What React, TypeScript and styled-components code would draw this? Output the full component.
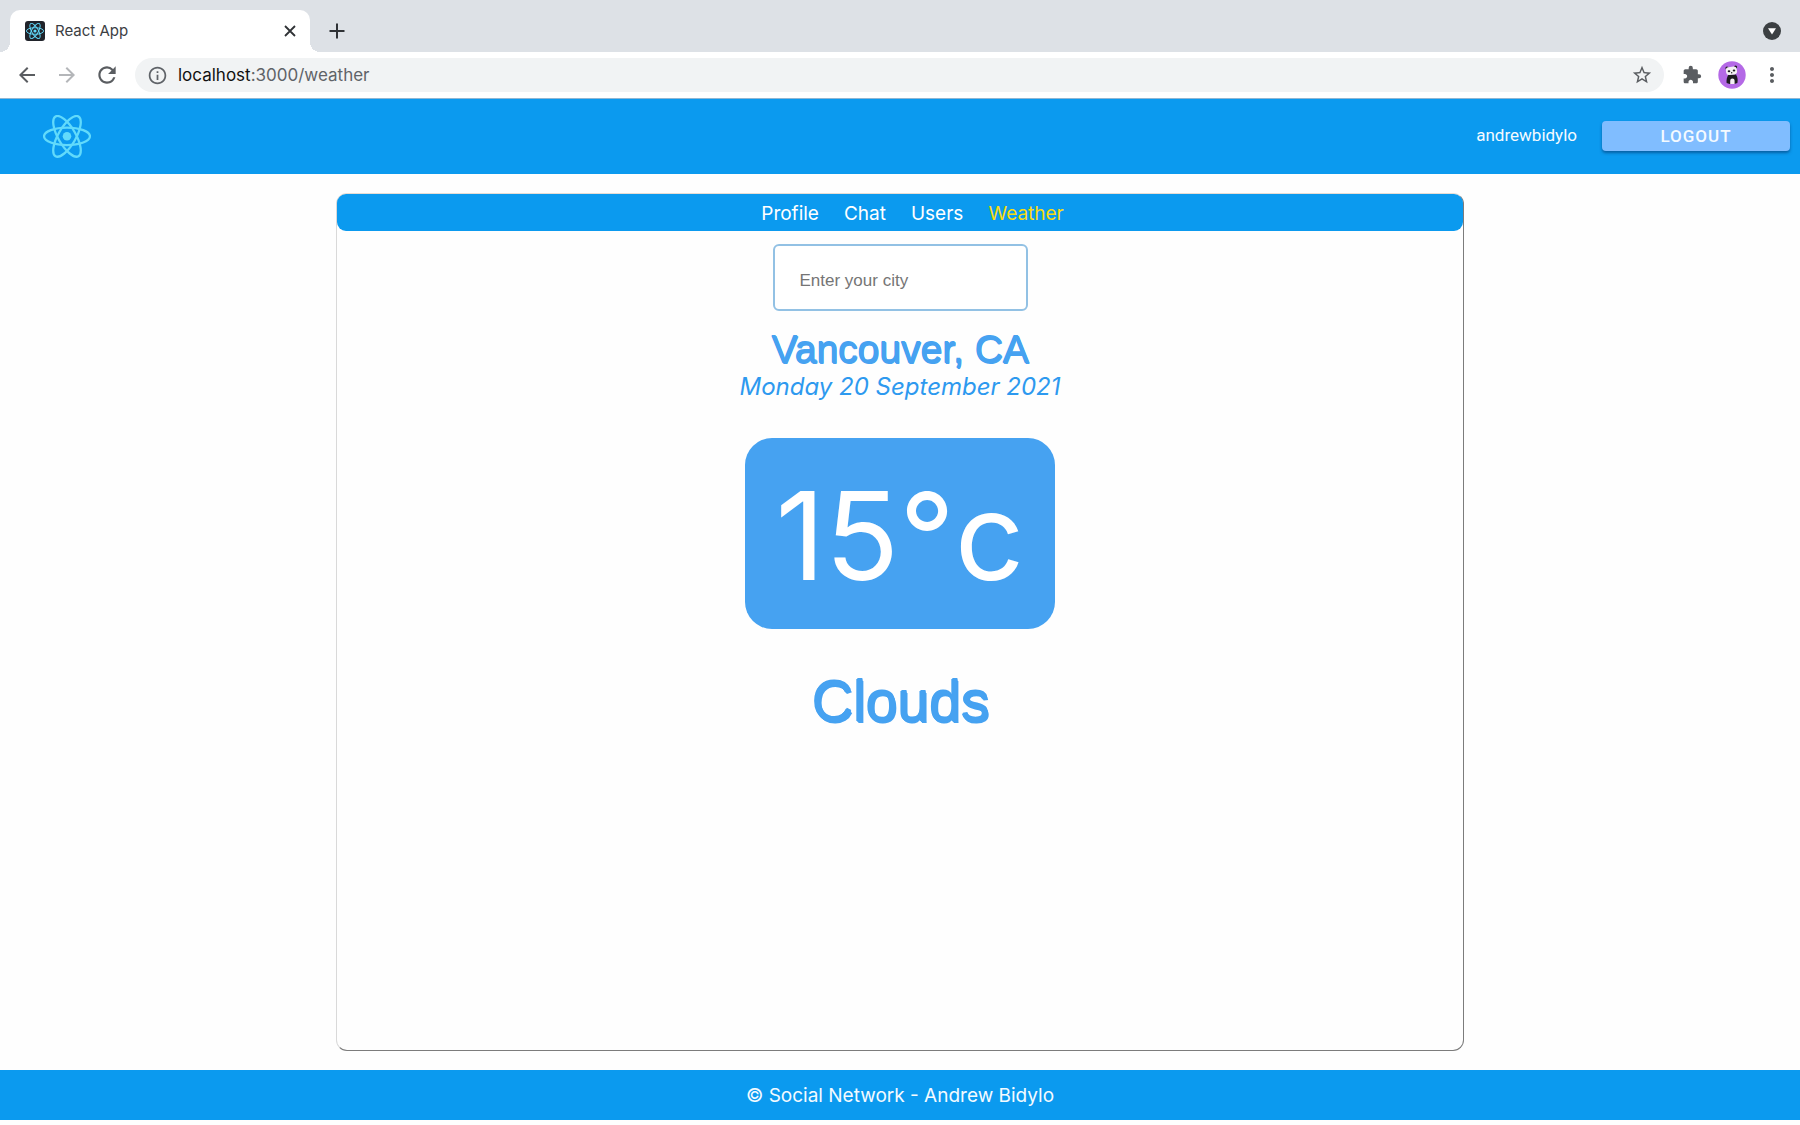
import React, { useState } from 'react';
import styled, { createGlobalStyle } from 'styled-components';
import {
  MdArrowBack,
  MdArrowForward,
  MdExtension,
  MdInfoOutline,
  MdMoreVert,
  MdRefresh,
  MdStarBorder,
} from 'react-icons/md';

const color = {
  brand: '#0b9aef',
  sky: '#46a2f1',
  reactCyan: '#61dafb',
  page: '#fefefe',
  chromeIcon: '#5a5d61',
};

const displayFont = '"Liberation Sans", Arial, sans-serif';

const GlobalStyle = createGlobalStyle`
  *, *::before, *::after { box-sizing: border-box; }
  body {
    margin: 0;
    background: ${color.page};
    font-family: Inter, "Liberation Sans", sans-serif;
  }
  button { border: 0; padding: 0; background: none; font: inherit; color: inherit; cursor: pointer; }
  svg { display: block; flex: none; }
`;

const Screen = styled.div`
  display: flex;
  flex-direction: column;
  min-height: 100vh;
  padding-bottom: 5px;
`;

/* ---------- Browser window ---------- */

const TabStrip = styled.div`
  display: flex;
  align-items: flex-end;
  height: 52px;
  padding: 0 17px 0 10px;
  background: #dde1e6;
`;

const Tab = styled.div`
  position: relative;
  display: flex;
  align-items: center;
  gap: 10px;
  width: 300px;
  height: 42px;
  padding: 0 14px 0 15px;
  border-radius: 10px 10px 0 0;
  background: #fff;
  color: #3c4043;
  font-size: 15px;
  line-height: 20px;

  &::before,
  &::after {
    content: '';
    position: absolute;
    bottom: 0;
    width: 10px;
    height: 10px;
  }
  &::before {
    right: 100%;
    background: radial-gradient(circle at 0 0, transparent 10px, #fff 10px);
  }
  &::after {
    left: 100%;
    background: radial-gradient(circle at 100% 0, transparent 10px, #fff 10px);
  }
`;

const TabTitle = styled.span`
  flex: 1;
`;

const Favicon = styled.span`
  display: grid;
  place-items: center;
  width: 20px;
  height: 20px;
  border-radius: 3px;
  background: #20232a;
`;

const IconButton = styled.button<{ $size?: number; $tint?: string }>`
  display: grid;
  place-items: center;
  place-content: center;
  flex: none;
  width: ${(p) => p.$size ?? 22}px;
  height: ${(p) => p.$size ?? 22}px;
  color: ${(p) => p.$tint ?? color.chromeIcon};
`;

const StripActions = styled.div`
  display: flex;
  flex: 1;
  align-items: center;
  justify-content: space-between;
  height: 42px;
  padding-left: 16px;
`;

const Toolbar = styled.div`
  display: flex;
  align-items: center;
  gap: 17px;
  height: 46px;
  padding: 0 17px 0 16px;
  background: #fff;
`;

const ToolGroup = styled.div<{ $gap: number }>`
  display: flex;
  align-items: center;
  gap: ${(p) => p.$gap}px;
`;

const AddressBar = styled.div`
  display: flex;
  flex: 1;
  align-items: center;
  gap: 10px;
  height: 34px;
  padding: 0 11px 0 12px;
  border-radius: 17px;
  background: #f1f3f4;
  color: #5f6368;
`;

const Address = styled.div`
  flex: 1;
  font-size: 17px;
  line-height: 22px;
  outline: none;
`;

const Host = styled.span`
  color: #111;
`;

/* ---------- App ---------- */

const Header = styled.header`
  display: flex;
  align-items: center;
  justify-content: space-between;
  height: 76px;
  padding: 0 10px 0 43px;
  border-top: 1px solid #8fb6d3;
  background: ${color.brand};
`;

const Account = styled.div`
  display: flex;
  align-items: center;
  gap: 25px;
  padding-bottom: 2px;
  font-family: Roboto, sans-serif;
  font-size: 17px;
  line-height: 20px;
  color: #f4faff;
`;

const UserName = styled.span`
  padding-bottom: 2px;
`;

const LogoutButton = styled.button`
  width: 188px;
  height: 30px;
  border-radius: 4px;
  background: #80bdff;
  box-shadow: 0 2px 3px rgba(0, 40, 90, 0.5);
  font-weight: 500;
  letter-spacing: 1px;
`;

const Main = styled.main`
  display: flex;
  flex: 1;
  padding: 19px;
`;

const Card = styled.section`
  flex: 1;
  max-width: 1128px;
  margin: 0 auto;
  border: 1px solid;
  border-color: #e6ddd5 #7c7c7c #7c7c7c #d9d9d9;
  border-radius: 11px;
`;

const Nav = styled.nav`
  display: flex;
  align-items: center;
  justify-content: center;
  gap: 25px;
  height: 37px;
  padding: 2px 0 0 25px;
  border-radius: 9px;
  background: ${color.brand};
`;

const NavLink = styled.a<{ $active?: boolean }>`
  color: ${(p) => (p.$active ? '#f8dc10' : '#fff')};
  font-size: 19px;
  line-height: 24px;
  text-decoration: none;
`;

const Weather = styled.div`
  display: flex;
  flex-direction: column;
  align-items: center;
  padding-top: 13px;
  color: ${color.sky};
`;

const CityInput = styled.input`
  width: 255px;
  height: 67px;
  padding: 6px 25px 0;
  border: 2px solid #92c1e4;
  border-radius: 6px;
  outline: none;
  background: #fff;
  color: #444;
  font-family: ${displayFont};
  font-size: 17px;

  &::placeholder {
    color: #757575;
  }
`;

const Place = styled.h1`
  margin: 17px 0 0;
  font-family: ${displayFont};
  font-size: 39px;
  font-weight: 400;
  line-height: 44px;
  text-shadow: 1px 0 ${color.sky}, 1px 1px ${color.sky}, 0 -1px ${color.sky};
`;

const DateLine = styled.p`
  margin: 0;
  color: #2d99ef;
  font-size: 24px;
  font-style: italic;
  line-height: 30px;
`;

const Temperature = styled.div`
  margin-top: 36px;
  padding: 24px 30px 20px;
  border-radius: 27px;
  background: ${color.sky};
  color: #fff;
  font-size: 122px;
  line-height: 147px;
`;

const Condition = styled.h2`
  margin: 40px 0 0;
  font-family: ${displayFont};
  font-size: 57px;
  font-weight: 400;
  line-height: 64px;
  text-shadow: 1px 0 ${color.sky}, 1px -1px ${color.sky}, 1px 1px ${color.sky}, 2px 2px ${color.sky};
`;

const Footer = styled.footer`
  display: grid;
  place-items: center;
  height: 50px;
  padding-top: 2px;
  background: ${color.brand};
  color: #f4faff;
  font-size: 19px;
  line-height: 24px;
`;

/* ---------- Drawings ---------- */

function ReactLogo({ width, stroke = 1 }: { width: number; stroke?: number }) {
  return (
    <svg width={width} viewBox="-11.5 -10.23 23 20.46" aria-hidden="true">
      <circle r="2.05" fill={color.reactCyan} />
      <g stroke={color.reactCyan} strokeWidth={stroke} fill="none">
        <ellipse rx="11" ry="4.2" />
        <ellipse rx="11" ry="4.2" transform="rotate(60)" />
        <ellipse rx="11" ry="4.2" transform="rotate(120)" />
      </g>
    </svg>
  );
}

function CloseIcon() {
  return (
    <svg width="12" height="12" viewBox="0 0 12 12" stroke="currentColor" strokeWidth="1.8">
      <path d="M1 1 11 11M11 1 1 11" />
    </svg>
  );
}

function PlusIcon() {
  return (
    <svg width="16" height="16" viewBox="0 0 16 16" stroke="currentColor" strokeWidth="2">
      <path d="M8 .5V15.500M.5 8H15.500" />
    </svg>
  );
}

function TabSearchIcon() {
  return (
    <svg width="18" height="18" viewBox="0 0 18 18">
      <circle cx="9" cy="9" r="9" fill="#3c4043" />
      <path d="M5 6.300h8L9 12.500z" fill="#fff" />
    </svg>
  );
}

function PandaAvatar() {
  return (
    <svg width="28" height="28" viewBox="0 0 28 28">
      <circle cx="14" cy="14" r="13.7" fill="#b469e6" />
      <g fill="#1d1b20">
        <circle cx="9" cy="7" r="1.6" />
        <circle cx="17.600" cy="6" r="1.6" />
        <path d="M10.500 13.500h7.500c1.600 2.500 2 5.500 1.400 8.500l-3 1h-4.800l-3-1c-.4-3 .4-6 1.900-8.500z" />
      </g>
      <rect x="8" y="5.800" width="11" height="8" rx="3" fill="#f4f1f4" transform="rotate(-7 13.500 10)" />
      <path d="M12.200 23v-3.200a2.200 2.200 0 0 1 4.400 0V23z" fill="#f4f1f4" />
      <g fill="#1d1b20">
        <ellipse cx="11" cy="10.300" rx="1.300" ry="1" />
        <ellipse cx="16" cy="9.600" rx="1.300" ry="1" />
        <circle cx="13.700" cy="11.700" r=".7" />
      </g>
    </svg>
  );
}

const links = ['Profile', 'Chat', 'Users', 'Weather'];

export default function App() {
  const [city, setCity] = useState('');

  return (
    <Screen>
      <GlobalStyle />

      <TabStrip>
        <Tab>
          <Favicon>
            <ReactLogo width={18} stroke={1.2} />
          </Favicon>
          <TabTitle>React App</TabTitle>
          <IconButton $size={12} $tint="#2f3236" aria-label="Close tab">
            <CloseIcon />
          </IconButton>
        </Tab>
        <StripActions>
          <IconButton $tint="#2f3236" aria-label="New tab">
            <PlusIcon />
          </IconButton>
          <IconButton aria-label="Search tabs">
            <TabSearchIcon />
          </IconButton>
        </StripActions>
      </TabStrip>

      <Toolbar>
        <ToolGroup $gap={18}>
          <IconButton aria-label="Back">
            <MdArrowBack size={24} />
          </IconButton>
          <IconButton $tint="#b4b6b9" aria-label="Forward">
            <MdArrowForward size={24} />
          </IconButton>
          <IconButton aria-label="Reload">
            <MdRefresh size={26} />
          </IconButton>
        </ToolGroup>
        <AddressBar>
          <MdInfoOutline size={21} />
          <Address role="textbox" tabIndex={0} aria-label="Address">
            <Host>localhost</Host>:3000/weather
          </Address>
          <IconButton aria-label="Bookmark this tab">
            <MdStarBorder size={22} />
          </IconButton>
        </AddressBar>
        <ToolGroup $gap={15}>
          <IconButton aria-label="Extensions">
            <MdExtension size={20} />
          </IconButton>
          <IconButton $size={28} aria-label="Browser profile">
            <PandaAvatar />
          </IconButton>
          <IconButton aria-label="Menu">
            <MdMoreVert size={24} />
          </IconButton>
        </ToolGroup>
      </Toolbar>

      <Header>
        <ReactLogo width={48} stroke={1.1} />
        <Account>
          <UserName>andrewbidylo</UserName>
          <LogoutButton>LOGOUT</LogoutButton>
        </Account>
      </Header>

      <Main>
        <Card>
          <Nav>
            {links.map((name) => (
              <NavLink key={name} href={`#${name.toLowerCase()}`} $active={name === 'Weather'}>
                {name}
              </NavLink>
            ))}
          </Nav>
          <Weather>
            <CityInput
              type="text"
              aria-label="City"
              placeholder="Enter your city"
              value={city}
              onChange={(e) => setCity(e.target.value)}
            />
            <Place>Vancouver, CA</Place>
            <DateLine>Monday 20 September 2021</DateLine>
            <Temperature>15°c</Temperature>
            <Condition>Clouds</Condition>
          </Weather>
        </Card>
      </Main>

      <Footer>© Social Network - Andrew Bidylo</Footer>
    </Screen>
  );
}
